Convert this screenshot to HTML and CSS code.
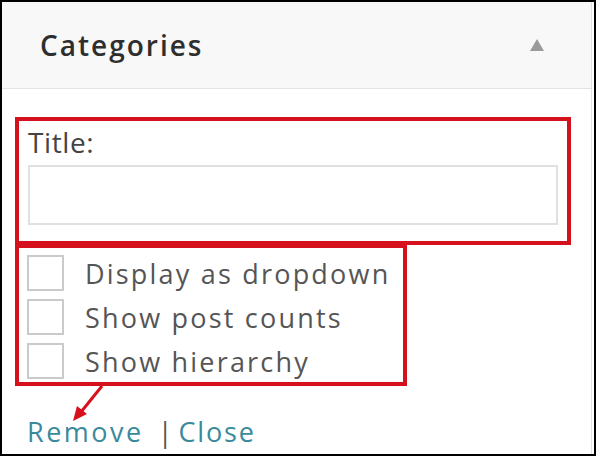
FILE: index.html
```html
<!DOCTYPE html>
<html>
<head>
<meta charset="utf-8">
<link rel="stylesheet" href="styles.css">
</head>
<body>
<div class="frame">
  <div class="widget">
    <div class="header">
      <span class="title">Categories</span>
      <span class="toggle"></span>
    </div>
    <div class="body">
      <div class="box box-title">
        <div class="label">Title:</div>
        <div class="input"></div>
      </div>
      <div class="box box-opts">
        <div class="opt"><span class="cb"></span><span class="opt-label">Display as dropdown</span></div>
        <div class="opt"><span class="cb"></span><span class="opt-label">Show post counts</span></div>
        <div class="opt"><span class="cb"></span><span class="opt-label">Show hierarchy</span></div>
      </div>
      <div class="actions">
        <a class="link">Remove</a><span class="sep">|</span><a class="link close">Close</a>
      </div>
    </div>
  </div>
  <svg class="arrow" width="60" height="60" viewBox="0 0 60 60">
    <line x1="32" y1="2" x2="11" y2="28" stroke="#d8101c" stroke-width="3"/>
    <polygon points="3,37 7,22 17,30" fill="#d8101c"/>
  </svg>
</div>
</body>
</html>
```
FILE: styles.css
```css
* { box-sizing: border-box; }
body {
  margin: 0;
  background: #fff;
  font-family: "Open Sans", "DejaVu Sans", sans-serif;
}
.frame {
  position: relative;
  width: 596px;
  height: 456px;
  border: 2px solid #000;
  background: #fff;
}
.widget {
  width: 590px;
  height: 100%;
  border-right: 1px solid #e2e2e2;
}
.header {
  height: 87px;
  background: #f8f8f8;
  border-bottom: 1px solid #e3e3e3;
  display: flex;
  align-items: center;
  padding-left: 38px;
  padding-right: 47px;
}
.title {
  font-size: 28px;
  font-weight: 600;
  color: #2e2e2e;
  letter-spacing: 2px;
}
.toggle {
  margin-left: auto;
  width: 0;
  height: 0;
  border-left: 7.5px solid transparent;
  border-right: 7.5px solid transparent;
  border-bottom: 12px solid #9a9a9a;
}
.body {
  padding: 28px 0 0 13px;
}
.box {
  border: 4px solid #d4111d;
}
.box-title {
  width: 556px;
  padding: 5px 9px 16px 9px;
}
.label {
  font-size: 28px;
  line-height: 32px;
  color: #444;
  letter-spacing: 0.6px;
}
.input {
  margin-top: 7px;
  height: 60px;
  border: 2px solid #e0e0e0;
}
.box-opts {
  width: 392px;
  margin-top: -1px;
  padding: 7px 0 3px 8px;
  display: flex;
  flex-direction: column;
  gap: 8px;
}
.opt {
  display: flex;
  align-items: center;
  height: 36px;
}
.cb {
  width: 37px;
  height: 36px;
  border: 2px solid #cacaca;
  background: #fff;
  flex: none;
}
.opt-label {
  margin-left: 21px;
  font-size: 27px;
  color: #555;
  white-space: nowrap;
  letter-spacing: 2.2px;
}
.actions {
  margin-top: 29px;
  padding-left: 12px;
  font-size: 27px;
  line-height: 34px;
  display: flex;
  align-items: center;
}
.link {
  color: #3a8a9c;
  letter-spacing: 2.5px;
}
.link.close {
  letter-spacing: 1.8px;
}
.sep {
  color: #555;
  margin: 0 6px 0 14px;
}
.arrow {
  position: absolute;
  left: 68px;
  top: 382px;
}
```
